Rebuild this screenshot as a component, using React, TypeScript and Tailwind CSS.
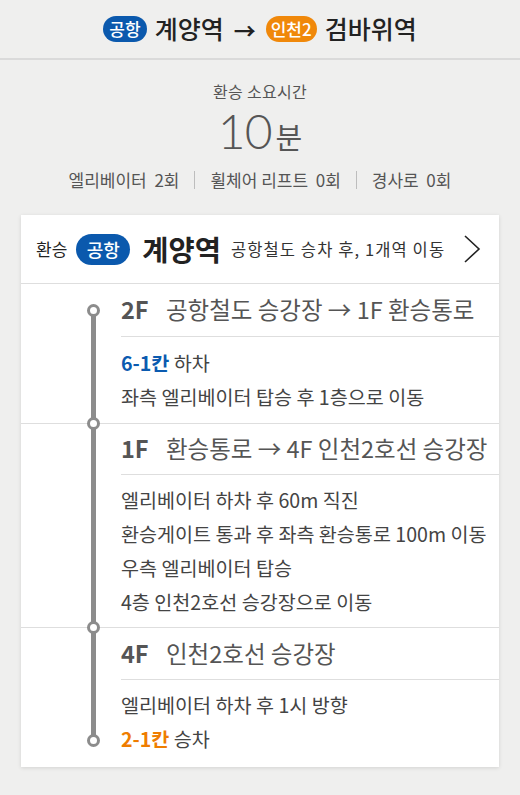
import React from 'react';

const font = { fontFamily: '"Noto Sans CJK KR", "Noto Sans", sans-serif' };

type Step = {
  floor: string;
  title: string;
  lines: React.ReactNode[];
  titleH: string;
  body: string;
};

const steps: Step[] = [
  {
    floor: '2F',
    title: '공항철도 승강장 → 1F 환승통로',
    titleH: 'h-[53px]',
    body: 'pt-[9px] pb-[9px]',
    lines: [
      <><span className="font-bold text-[#0b5bb0]">6-1칸</span> 하차</>,
      '좌측 엘리베이터 탑승 후 1층으로 이동',
    ],
  },
  {
    floor: '1F',
    title: '환승통로 → 4F 인천2호선 승강장',
    titleH: 'h-[51px]',
    body: 'pt-[8px] pb-[8px]',
    lines: [
      '엘리베이터 하차 후 60m 직진',
      '환승게이트 통과 후 좌측 환승통로 100m 이동',
      '우측 엘리베이터 탑승',
      '4층 인천2호선 승강장으로 이동',
    ],
  },
  {
    floor: '4F',
    title: '인천2호선 승강장',
    titleH: 'h-[52px]',
    body: 'pt-[8px] pb-[11px]',
    lines: [
      '엘리베이터 하차 후 1시 방향',
      <><span className="font-bold text-[#ef7d00]">2-1칸</span> 승차</>,
    ],
  },
];

const Dot: React.FC<{ top: number }> = ({ top }) => (
  <span
    className="absolute left-[66px] w-[13px] h-[13px] rounded-full bg-white border-[3px] border-[#8c8c8c]"
    style={{ top: top - 6 }}
  />
);

const App: React.FC = () => {
  return (
    <div className="min-h-[795px] w-[520px] bg-[#efefee] text-[#555]" style={font}>
      <div className="h-[60px] flex items-center justify-center gap-2 border-b-2 border-[#dadada]">
        <span className="px-[6px] h-[26px] flex items-center rounded-full bg-[#0b59ad] text-white text-[17px] font-medium">공항</span>
        <span className="text-[25px] text-[#222] font-medium">계양역</span>
        <span className="text-[22px] text-[#222] font-bold mx-[2px]">→</span>
        <span className="px-[5px] h-[26px] flex items-center rounded-full bg-[#f0880a] text-white text-[17px] font-medium">인천2</span>
        <span className="text-[25px] text-[#222] font-medium">검바위역</span>
      </div>

      <div className="flex flex-col items-center pt-[20px]">
        <div className="text-[16px] leading-[22px] tracking-[0.3px]">환승 소요시간</div>
        <div className="flex items-baseline leading-[50px] mt-[4px]">
          <span className="text-[48px] font-light tracking-[-1px]" style={{ fontFamily: 'Lato, "Noto Sans CJK KR", sans-serif' }}>10</span>
          <span className="text-[29px] ml-[4px]">분</span>
        </div>
        <div className="flex items-center text-[17px] mt-[7px] leading-[24px]">
          <span>엘리베이터&nbsp; 2회</span>
          <span className="w-px h-[18px] bg-[#bdbdbd] mx-[15px]" />
          <span>휠체어 리프트&nbsp; 0회</span>
          <span className="w-px h-[18px] bg-[#bdbdbd] mx-[15px]" />
          <span>경사로&nbsp; 0회</span>
        </div>
      </div>

      <div className="mx-[21px] mt-[23px] bg-white shadow-[0_1px_4px_rgba(0,0,0,0.12)]">
        <div className="h-[69px] flex items-center pl-[15px] pr-[18px] border-b border-[#dedede]">
          <span className="text-[17px] text-[#222]">환승</span>
          <span className="ml-[9px] w-[54px] h-[31px] flex items-center justify-center rounded-full bg-[#0b59ad] text-white text-[18px] font-medium">공항</span>
          <span className="ml-[12px] text-[28.5px] font-bold text-[#222]">계양역</span>
          <span className="ml-[10px] text-[16.5px] tracking-[1.1px] text-[#333]">공항철도 승차 후, 1개역 이동</span>
          <svg className="ml-auto" width="18" height="28" viewBox="0 0 18 28" fill="none">
            <polyline points="2,1 16,14 2,27" stroke="#222" strokeWidth="1.6" />
          </svg>
        </div>

        <div className="relative">
          <span className="absolute left-[70px] top-[26px] w-[5px] h-[430px] bg-[#8c8c8c]" />
          <Dot top={26} />
          <Dot top={139} />
          <Dot top={343} />
          <Dot top={456} />
          {steps.map((s, i) => (
            <div key={s.floor} className={i > 0 ? 'border-t border-[#dedede]' : ''}>
              <div className="ml-[100px]">
                <div className={`${s.titleH} flex items-center border-b border-[#dedede] text-[23.5px]`}>
                  <span className="font-bold w-[45px]">{s.floor}</span>
                  <span>{s.title}</span>
                </div>
                <div className={`${s.body} text-[19.6px] text-[#444]`}>
                  {s.lines.map((l, j) => (
                    <div key={j} className="leading-[34px]">{l}</div>
                  ))}
                </div>
              </div>
            </div>
          ))}
        </div>
      </div>
    </div>
  );
};

export default App;
